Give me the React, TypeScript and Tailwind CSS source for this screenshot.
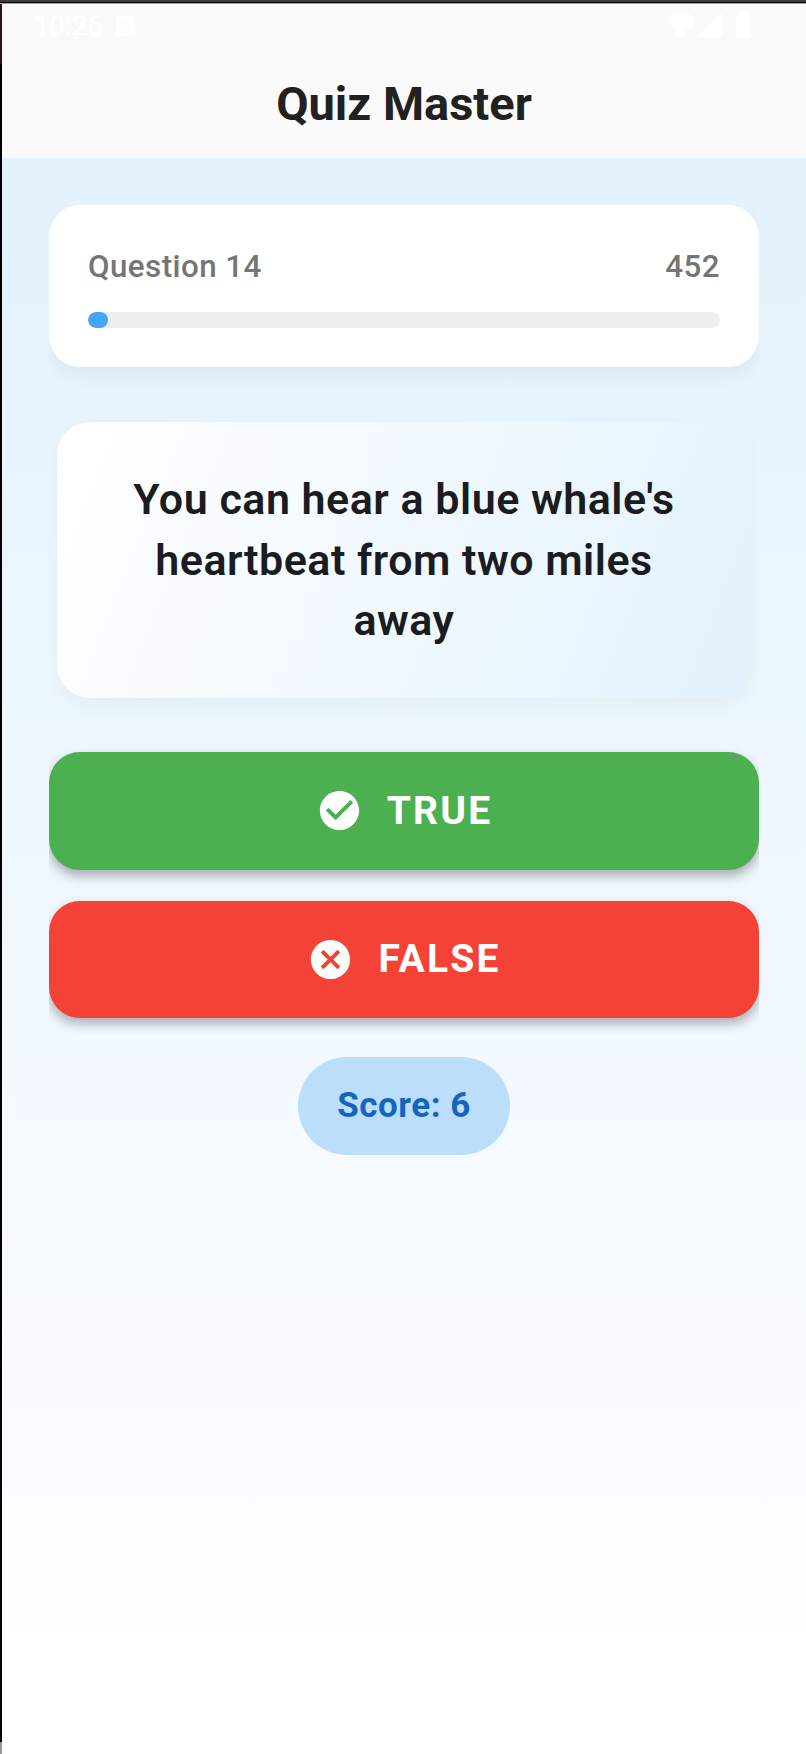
import React from "react";

function StatusBar() {
  return (
    <div className="flex h-[44px] items-start justify-between pl-[32px] pr-[54px] pt-[8px] text-white">
      <div className="flex items-start">
        <span className="mt-[1px] w-[70px] whitespace-nowrap text-[27px] leading-[27px] tracking-[0.35px]">10:26</span>
        <svg className="ml-[12px] mt-[4px] h-[20px] w-[19px]" viewBox="0 0 19 20">
          <rect width="19" height="20" rx="2" fill="#fff" />
          <path d="M5 14 9 5l4 9M6.500 11h5" stroke="#fafafa" strokeWidth="2" fill="none" />
          <path d="M10 17.500h7" stroke="#fafafa" strokeWidth="1.500" strokeDasharray="1.5 1" />
        </svg>
      </div>
      <svg className="-mr-[1px] h-[26px] w-[85px] -translate-x-[2px]" viewBox="0 0 85 26" fill="#fff">
        <path d="M0 6.500Q15 -5.500 29.500 6.500L15 25Z" />
        <path d="M31.500 25 56 1V25Z" />
        <path d="M71 3h4V0.500h6V3h2a2 2 0 0 1 2 2V24a2 2 0 0 1-2 2H72a2 2 0 0 1-2-2V5a2 2 0 0 1 1-2Z" />
      </svg>
    </div>
  );
}

function ProgressCard() {
  return (
    <section className="flex h-[162px] flex-col rounded-[31px] bg-white px-[39px] pt-[39px] shadow-[0_8px_20px_rgba(0,0,0,0.05)]">
      <div className="flex justify-between text-[31.300px] font-medium leading-[45px] tracking-[0.45px] text-[#757575]">
        <span>Question 14</span>
        <span>452</span>
      </div>
      <div className="mt-[23px] h-[16px] overflow-hidden rounded-full bg-[#eeeeee]">
        <div className="h-full w-[20px] rounded-[8px] bg-[#42a5f5]" />
      </div>
    </section>
  );
}

function QuestionCard() {
  return (
    <section className="mx-[7.500px] mt-[55px] flex h-[275.500px] items-center justify-center rounded-[33px] bg-[linear-gradient(111.600deg,#ffffff,#e3f2fd)] px-[47px] shadow-[0_8px_20px_rgba(0,0,0,0.04)]">
      <h2 className="text-center text-[43px] font-semibold leading-[60.500px] tracking-[0.5px] text-[#1a1c20]">
        You can hear a blue whale's
        <br />
        heartbeat from two miles
        <br />
        away
      </h2>
    </section>
  );
}

function CheckIcon() {
  return (
    <svg className="size-[47px]" viewBox="0 0 24 24" fill="currentColor">
      <path d="M12 2C6.480 2 2 6.480 2 12s4.480 10 10 10 10-4.480 10-10S17.520 2 12 2zm-2 15-5-5 1.410-1.410L10 14.170l7.590-7.590L19 8l-9 9z" />
    </svg>
  );
}

function CancelIcon() {
  return (
    <svg className="size-[47px]" viewBox="0 0 24 24" fill="currentColor">
      <path d="M12 2C6.470 2 2 6.470 2 12s4.470 10 10 10 10-4.470 10-10S17.530 2 12 2zm5 13.590L15.590 17 12 13.410 8.410 17 7 15.590 10.590 12 7 8.410 8.410 7 12 10.590 15.590 7 17 8.410 13.410 12 17 15.590z" />
    </svg>
  );
}

export default function App() {
  return (
    <div
      className="flex h-[1754px] w-[806px] flex-col bg-[linear-gradient(#24161a_0_64px,#000_64px_1742px,#9a9a9a_1742px)] pl-[2px] text-[#212121] antialiased"
      style={{ fontFamily: 'Roboto, "Liberation Sans", sans-serif' }}
    >
      <div className="-ml-[2px] h-[4px] shrink-0 border-b border-[#aaaaaa] bg-[linear-gradient(#433a3d_0_2px,#000_2px)]" />
      <header className="h-[154px] shrink-0 bg-[#fafafa]">
        <StatusBar />
        <h1 className="pt-[1px] text-center text-[47px] font-bold leading-[110px]">Quiz Master</h1>
      </header>
      <main className="flex-1 bg-[linear-gradient(#e3f2fd,#ffffff)] pl-[47px] pr-[47px] pt-[47px]">
        <div className="h-[1100px] overflow-hidden">
          <ProgressCard />
          <QuestionCard />
          <button className="mt-[54.500px] flex h-[117.500px] w-full items-center justify-center gap-[24px] rounded-[31px] bg-[#4caf50] text-[39px] font-bold tracking-[2.200px] text-white shadow-[0_6px_12px_rgba(0,0,0,0.3)]">
            <CheckIcon />
            <span>TRUE</span>
          </button>
          <button className="mt-[31.500px] flex h-[116.500px] w-full items-center justify-center gap-[24px] rounded-[31px] bg-[#f44336] text-[39px] font-bold tracking-[2.200px] text-white shadow-[0_6px_12px_rgba(0,0,0,0.3)]">
            <CancelIcon />
            <span>FALSE</span>
          </button>
          <div className="mx-auto mt-[39.500px] flex h-[98px] w-[212px] items-center justify-center rounded-[49px] bg-[#bbdefb] text-[35px] font-bold tracking-[0.5px] text-[#1565c0]">
            Score: 6
          </div>
        </div>
      </main>
    </div>
  );
}
